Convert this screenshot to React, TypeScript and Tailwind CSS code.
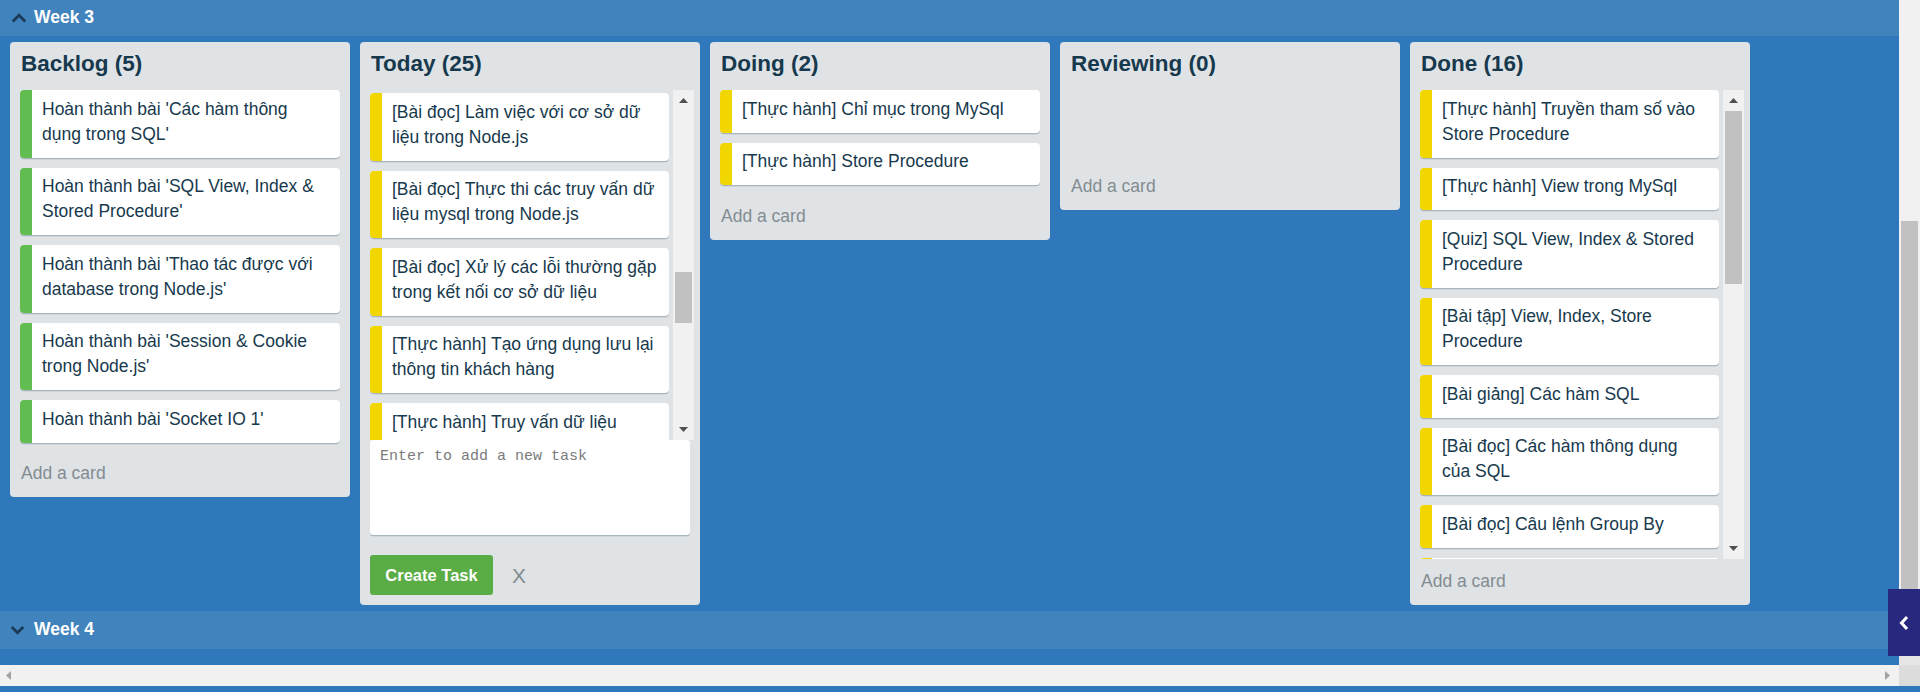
import React from 'react'

type Task = { text: string; color: string }

const GREEN = 'bg-[#61BD4F]'
const YELLOW = 'bg-[#F2D600]'

const backlog: Task[] = [
  { text: "Hoàn thành bài 'Các hàm thông dụng trong SQL'", color: GREEN },
  { text: "Hoàn thành bài 'SQL View, Index & Stored Procedure'", color: GREEN },
  { text: "Hoàn thành bài 'Thao tác được với database trong Node.js'", color: GREEN },
  { text: "Hoàn thành bài 'Session & Cookie trong Node.js'", color: GREEN },
  { text: "Hoàn thành bài 'Socket IO 1'", color: GREEN },
]

const today: Task[] = [
  { text: '[Bài đọc] Làm việc với cơ sở dữ liệu trong Node.js', color: YELLOW },
  { text: '[Bài đọc] Thực thi các truy vấn dữ liệu mysql trong Node.js', color: YELLOW },
  { text: '[Bài đọc] Xử lý các lỗi thường gặp trong kết nối cơ sở dữ liệu', color: YELLOW },
  { text: '[Thực hành] Tạo ứng dụng lưu lại thông tin khách hàng', color: YELLOW },
  { text: '[Thực hành] Truy vấn dữ liệu', color: YELLOW },
]

const doing: Task[] = [
  { text: '[Thực hành] Chỉ mục trong MySql', color: YELLOW },
  { text: '[Thực hành] Store Procedure', color: YELLOW },
]

const done: Task[] = [
  { text: '[Thực hành] Truyền tham số vào Store Procedure', color: YELLOW },
  { text: '[Thực hành] View trong MySql', color: YELLOW },
  { text: '[Quiz] SQL View, Index & Stored Procedure', color: YELLOW },
  { text: '[Bài tập] View, Index, Store Procedure', color: YELLOW },
  { text: '[Bài giảng] Các hàm SQL', color: YELLOW },
  { text: '[Bài đọc] Các hàm thông dụng của SQL', color: YELLOW },
  { text: '[Bài đọc] Câu lệnh Group By', color: YELLOW },
]

const Card = ({ task }: { task: Task }) => (
  <div className="flex shrink-0 rounded-[4px] bg-white overflow-hidden shadow-[0_1.25px_0_rgba(9,45,66,0.25)]">
    <div className={`w-[12px] shrink-0 ${task.color}`} />
    <div className="pl-[10px] pr-[12px] pt-[6.5px] pb-[11px] text-[17.5px] leading-[25px] text-[#17394D]">
      {task.text}
    </div>
  </div>
)

const Title = ({ children }: { children: React.ReactNode }) => (
  <h2 className="px-[1px] mb-[10px] text-[22.5px] leading-[32px] font-bold text-[#17394D]">{children}</h2>
)

const AddCard = () => (
  <div className="px-[1px] pt-[9.5px] pb-[11px] text-[17.5px] leading-[25px] text-[#838C91]">Add a card</div>
)

const Arrow = ({ up }: { up?: boolean }) => (
  <div className="h-[21px] shrink-0 flex items-center justify-center">
    <svg width="9" height="5" viewBox="0 0 9 5">
      <polygon points={up ? '0,5 4.5,0 9,5' : '0,0 4.5,5 9,0'} fill="#505050" />
    </svg>
  </div>
)

// fake scrollbar, drawn so it looks like the windows one in the shot
const ListScrollbar = ({ spacer, thumb }: { spacer: string; thumb: string }) => (
  <div className="w-[21px] shrink-0 bg-[#F1F1F1] flex flex-col">
    <Arrow up />
    <div className={spacer} />
    <div className={`mx-[2px] bg-[#C1C1C1] ${thumb}`} />
    <div className="flex-1" />
    <Arrow />
  </div>
)

const Column = ({ children }: { children: React.ReactNode }) => (
  <div className="w-[340px] shrink-0 rounded-[4px] bg-[#DFE3E6] px-[10px] pt-[6px] flex flex-col">{children}</div>
)

const WeekHeader = ({ label, open }: { label: string; open?: boolean }) => (
  <div className={`bg-[#4083BD] flex items-center ${open ? 'h-[36px] pl-[11px] gap-[7px]' : 'h-[38px] pl-[10px] gap-[9px]'}`}>
    {open ? (
      <svg width="16" height="10" viewBox="0 0 16 10">
        <polyline points="1.8,8.5 8,2.2 14.2,8.5" fill="none" stroke="#1B3A57" strokeWidth="2.8" />
      </svg>
    ) : (
      <svg width="15" height="10" viewBox="0 0 15 10">
        <polyline points="1.8,2 7.5,7.8 13.2,2" fill="none" stroke="#1B3A57" strokeWidth="2.8" />
      </svg>
    )}
    <span className="text-white font-bold text-[17.5px] leading-none">{label}</span>
  </div>
)

export default function App() {
  return (
    <div className="relative w-[1920px] h-[692px] overflow-hidden bg-[#2E78BB] flex flex-col font-['Liberation_Sans',Arial,sans-serif]">
      <div className="flex h-[665px] shrink-0">
        <div className="w-[1899px] flex flex-col">
          <WeekHeader label="Week 3" open />

          <div className="flex items-start gap-[10px] px-[10px] py-[6px]">
            <Column>
              <Title>Backlog (5)</Title>
              <div className="flex flex-col gap-[10px] pb-[9px]">
                {backlog.map((t) => (
                  <Card key={t.text} task={t} />
                ))}
              </div>
              <AddCard />
            </Column>

            <Column>
              <Title>Today (25)</Title>
              <div className="h-[350px] flex gap-[4px] mr-[-4px]">
                <div className="w-[299px] overflow-hidden flex flex-col gap-[10px] pt-[3px]">
                  {today.map((t) => (
                    <Card key={t.text} task={t} />
                  ))}
                </div>
                <ListScrollbar spacer="h-[161px]" thumb="h-[51px]" />
              </div>
              <textarea
                className="h-[95px] w-full resize-none rounded-[3px] bg-white px-[10px] py-[7px] border-0 outline-none shadow-[0_1.25px_0_rgba(9,45,66,0.25)] font-['Liberation_Mono',monospace] text-[15px] leading-[20px] text-[#17394D] placeholder:text-[#7B7B7B]"
                placeholder="Enter to add a new task"
              />
              <div className="flex items-center mt-[20px] mb-[10px]">
                <button className="h-[40px] w-[123px] rounded-[3px] bg-[#5AAC44] text-white font-bold text-[16.5px]">
                  Create Task
                </button>
                <span className="ml-[19px] text-[21px] leading-none text-[#838C91]">X</span>
              </div>
            </Column>

            <Column>
              <Title>Doing (2)</Title>
              <div className="flex flex-col gap-[10px] pb-[9px]">
                {doing.map((t) => (
                  <Card key={t.text} task={t} />
                ))}
              </div>
              <AddCard />
            </Column>

            <Column>
              <Title>Reviewing (0)</Title>
              <div className="h-[74px]" />
              <AddCard />
            </Column>

            <Column>
              <Title>Done (16)</Title>
              <div className="h-[469px] flex gap-[4px] mr-[-4px]">
                <div className="w-[299px] overflow-hidden flex flex-col gap-[10px]">
                  {done.map((t) => (
                    <Card key={t.text} task={t} />
                  ))}
                  {/* next card, only its top edge shows */}
                  <div className="flex h-[42px] shrink-0 rounded-[4px] bg-white overflow-hidden">
                    <div className="w-[12px] bg-[#F2D600]" />
                  </div>
                </div>
                <ListScrollbar spacer="h-0" thumb="h-[173px]" />
              </div>
              <AddCard />
            </Column>
          </div>

          <WeekHeader label="Week 4" />
          <div className="flex-1" />
        </div>

        {/* page scrollbar */}
        <div className="w-[21px] bg-[#F1F1F1] flex flex-col">
          <div className="h-[221px]" />
          <div className="mx-[2px] h-[435px] bg-[#C1C1C1]" />
          <div className="flex-1 bg-[#E6E6E6]" />
        </div>
      </div>

      <div className="flex h-[21px] shrink-0">
        <div className="w-[1899px] bg-[#F1F1F1] flex items-center justify-between px-[6px]">
          <svg width="5" height="9" viewBox="0 0 5 9">
            <polygon points="5,0 0,4.5 5,9" fill="#A3A3A3" />
          </svg>
          <svg width="5" height="9" viewBox="0 0 5 9" className="mr-[3px]">
            <polygon points="0,0 5,4.5 0,9" fill="#A3A3A3" />
          </svg>
        </div>
        <div className="w-[21px] bg-[#DCDCDC]" />
      </div>

      <button className="absolute right-0 top-[589px] w-[32px] h-[67px] bg-[#29287F] flex items-center justify-center">
        <svg width="10" height="16" viewBox="0 0 10 16">
          <polyline points="8,2 2.5,8 8,14" fill="none" stroke="#fff" strokeWidth="3" />
        </svg>
      </button>
    </div>
  )
}
